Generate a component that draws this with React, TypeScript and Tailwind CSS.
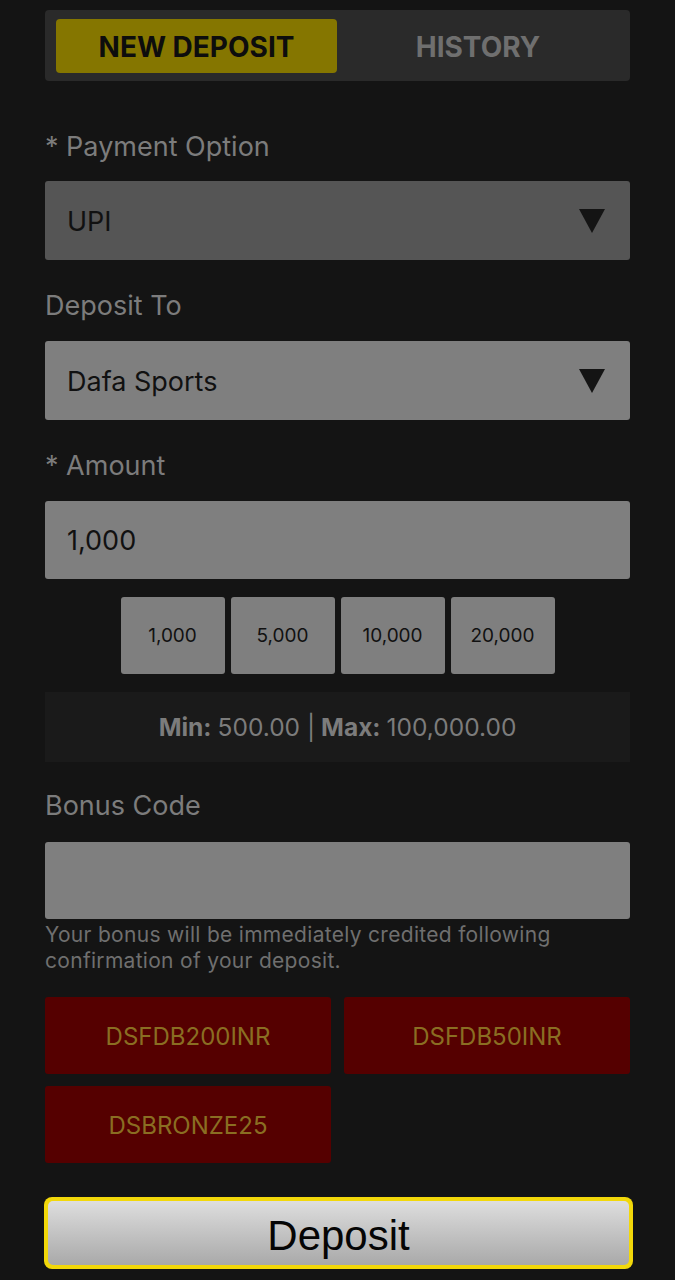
import React from "react";

const font = { fontFamily: "Inter, 'Noto Sans', sans-serif" };

function Caret() {
  return (
    <svg width="26" height="24" viewBox="0 0 26 24" className="shrink-0">
      <polygon points="0,0 26,0 13,24" fill="#141414" />
    </svg>
  );
}

function Select({ value, bg }: { value: string; bg: string }) {
  return (
    <div className={`flex h-[79px] items-center justify-between rounded-[3px] pl-[22px] pr-[25px] ${bg}`}>
      <span className="pt-[3px] text-[27px] text-[#111]">{value}</span>
      <Caret />
    </div>
  );
}

function Label({ children }: { children: React.ReactNode }) {
  return <div className="text-[27px] leading-[30px] text-[#7c7c7c]">{children}</div>;
}

export default function App() {
  const quick = ["1,000", "5,000", "10,000", "20,000"];
  const codes = ["DSFDB200INR", "DSFDB50INR", "DSBRONZE25"];
  return (
    <div className="min-h-[1280px] w-[675px] bg-[#141414] px-[45px] pt-[10px]" style={font}>
      <div className="flex h-[71px] items-center rounded-[4px] bg-[#2a2a2a] px-[11px]">
        <div className="flex h-[54px] w-[281px] items-center justify-center rounded-[4px] bg-[#857600] pt-[3px] text-[28px] font-bold text-[#0d0d0d]">
          NEW DEPOSIT
        </div>
        <div className="flex flex-1 items-center justify-center pt-[3px] text-[28px] font-bold text-[#6f6f6f]">HISTORY</div>
      </div>

      <div className="mt-[51px]">
        <Label>* Payment Option</Label>
      </div>
      <div className="mt-[19px]">
        <Select value="UPI" bg="bg-[#555555]" />
      </div>

      <div className="mt-[31px]">
        <Label>Deposit To</Label>
      </div>
      <div className="mt-[20px]">
        <Select value="Dafa Sports" bg="bg-[#7f7f7f]" />
      </div>

      <div className="mt-[31px]">
        <Label>* Amount</Label>
      </div>
      <div className="mt-[20px] flex h-[78px] items-center rounded-[3px] bg-[#7f7f7f] pl-[22px] pt-[3px] text-[27px] text-[#111]">
        1,000
      </div>

      <div className="mt-[18px] flex justify-center gap-[6px]">
        {quick.map((q) => (
          <div
            key={q}
            className="flex h-[77px] w-[104px] items-center justify-center rounded-[3px] bg-[#7f7f7f] pt-[2px] text-[19px] text-[#111]"
          >
            {q}
          </div>
        ))}
      </div>

      <div className="mt-[18px] flex h-[70px] items-center justify-center bg-[#1a1a1a] text-[24.5px] text-[#7c7c7c]">
        <span className="font-bold">Min:</span>
        <span className="ml-[6px]">500.00 |</span>
        <span className="ml-[6px] font-bold">Max:</span>
        <span className="ml-[6px]">100,000.00</span>
      </div>

      <div className="mt-[29px]">
        <Label>Bonus Code</Label>
      </div>
      <div className="mt-[21px] h-[77px] rounded-[3px] bg-[#7f7f7f]" />
      <div className="mt-[3px] text-[21px] leading-[26px] tracking-[0.3px] text-[#6f6f6f]">
        Your bonus will be immediately credited following
        <br />
        confirmation of your deposit.
      </div>

      <div className="mt-[23px] grid grid-cols-2 gap-x-[13px] gap-y-[12px]">
        {codes.map((c) => (
          <div
            key={c}
            className="flex h-[77px] items-center justify-center rounded-[3px] bg-[#550000] pt-[2px] text-[24px] text-[#8a6e22]"
          >
            {c}
          </div>
        ))}
      </div>

      <div className="-ml-[1px] -mr-[3px] mt-[34px] rounded-[8px] bg-[#f2d80a] p-[4px]">
        <div
          className="flex h-[64px] items-center justify-center rounded-[5px] bg-gradient-to-b from-[#dedede] to-[#a9a9a9] pt-[4px] text-[42px] text-[#050505]"
          style={{ fontFamily: "'Liberation Sans', Arial, sans-serif" }}
        >
          Deposit
        </div>
      </div>
    </div>
  );
}
